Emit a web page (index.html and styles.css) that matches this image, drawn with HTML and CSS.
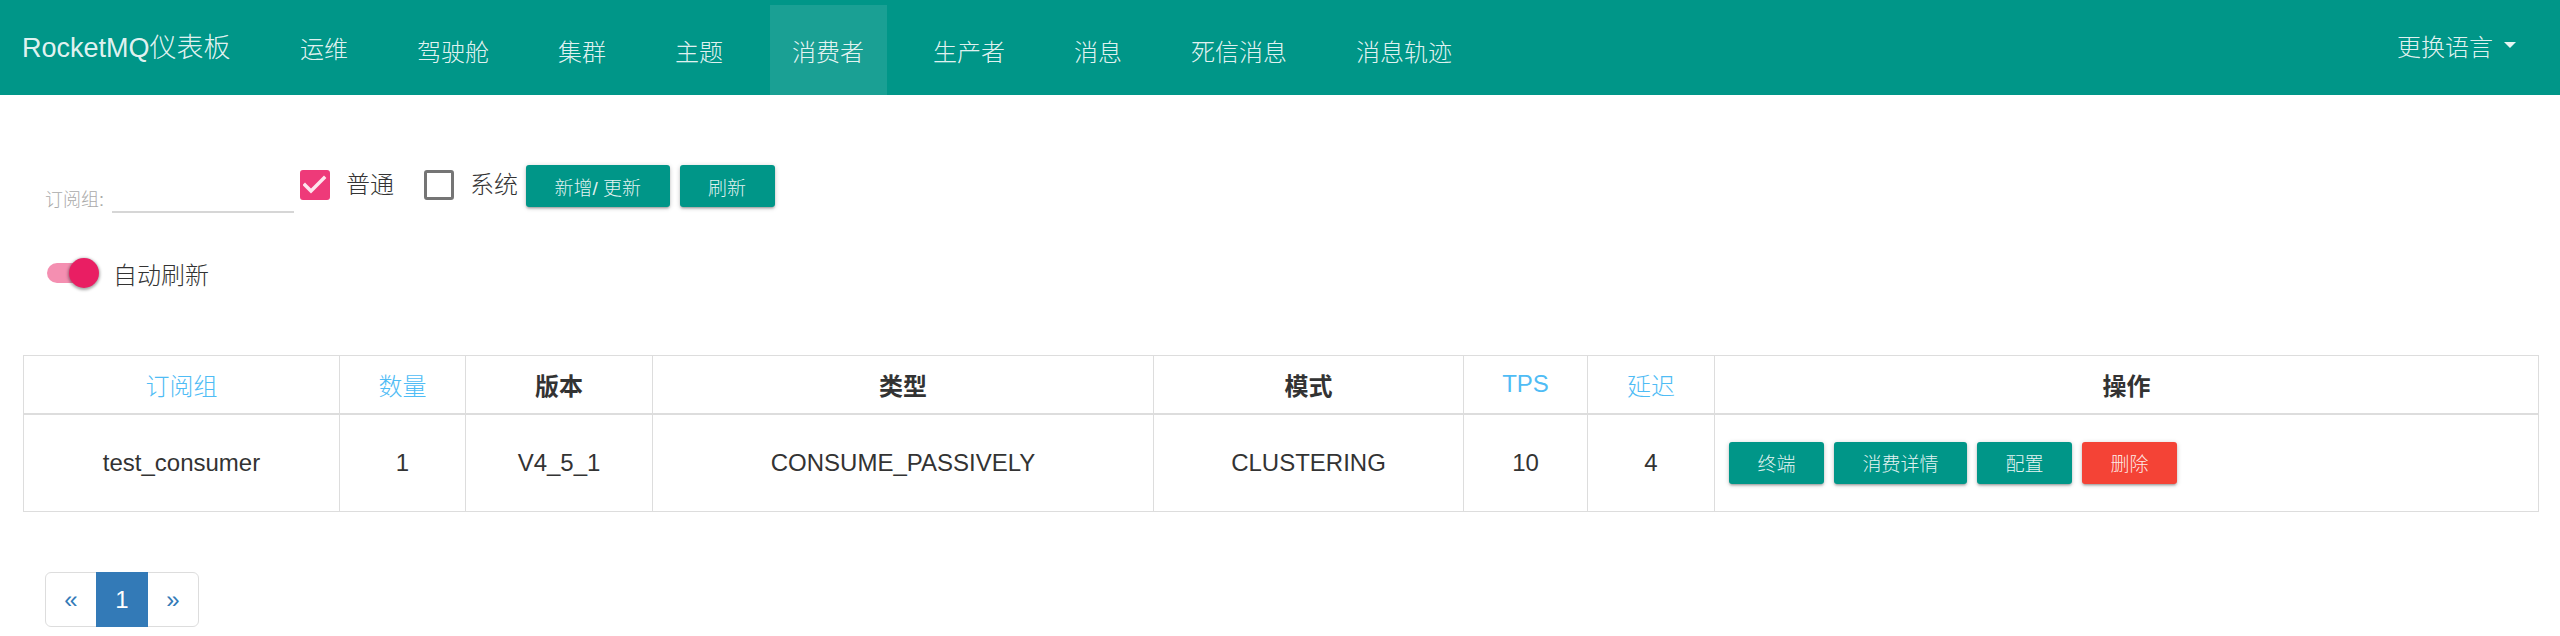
FILE: index.html
```html
<!DOCTYPE html>
<html lang="zh-CN">
<head>
<meta charset="utf-8">
<title>RocketMQ仪表板</title>
<link rel="stylesheet" href="styles.css">
</head>
<body>
<nav class="navbar">
  <a class="brand">RocketMQ仪表板</a>
  <ul class="nav">
    <li class="nav-item nav-item--raised">运维</li>
    <li class="nav-item">驾驶舱</li>
    <li class="nav-item">集群</li>
    <li class="nav-item">主题</li>
    <li class="nav-item active">消费者</li>
    <li class="nav-item">生产者</li>
    <li class="nav-item">消息</li>
    <li class="nav-item">死信消息</li>
    <li class="nav-item">消息轨迹</li>
  </ul>
  <div class="lang">更换语言<span class="caret"></span></div>
</nav>

<main class="content">
  <div class="filter-row">
    <label class="field"><span class="field-label">订阅组:</span><input class="field-input" type="text"></label>
    <label class="check check--first">
      <span class="check-box checked"><svg class="check-mark" width="24" height="24" viewBox="0 0 24 24"><polyline points="2,12 8,18 21,5" fill="none" stroke="#fde6ee" stroke-width="3.4" stroke-linecap="square"/></svg></span>
      <span class="check-text">普通</span>
    </label>
    <label class="check check--second">
      <span class="check-box"></span>
      <span class="check-text">系统</span>
    </label>
    <button class="btn btn--first">新增/ 更新</button>
    <button class="btn">刷新</button>
  </div>

  <div class="switch-row">
    <span class="switch"><span class="switch-track"></span><span class="switch-thumb"></span></span>
    <span class="switch-text">自动刷新</span>
  </div>

  <table class="grid">
    <colgroup>
      <col class="w-group"><col class="w-count"><col class="w-ver"><col class="w-type"><col class="w-mode"><col class="w-tps"><col class="w-delay"><col class="w-ops">
    </colgroup>
    <thead>
      <tr>
        <th class="sort">订阅组</th>
        <th class="sort">数量</th>
        <th>版本</th>
        <th>类型</th>
        <th>模式</th>
        <th class="sort">TPS</th>
        <th class="sort">延迟</th>
        <th>操作</th>
      </tr>
    </thead>
    <tbody>
      <tr>
        <td>test_consumer</td>
        <td>1</td>
        <td>V4_5_1</td>
        <td>CONSUME_PASSIVELY</td>
        <td>CLUSTERING</td>
        <td>10</td>
        <td>4</td>
        <td class="ops">
          <div class="ops-list">
            <button class="btn btn--sm">终端</button>
            <button class="btn btn--sm">消费详情</button>
            <button class="btn btn--sm">配置</button>
            <button class="btn btn--sm btn--danger">删除</button>
          </div>
        </td>
      </tr>
    </tbody>
  </table>

  <ul class="pagination">
    <li class="page"><span>«</span></li>
    <li class="page active"><span>1</span></li>
    <li class="page"><span>»</span></li>
  </ul>
</main>
</body>
</html>
```

FILE: styles.css
```css
* { box-sizing: border-box; }
html, body { margin: 0; padding: 0; }
body {
  font-family: "Liberation Sans", Arial, "Noto Sans CJK SC", sans-serif;
  font-size: 24px;
  font-weight: 300;
  color: #333;
  background: #fff;
}

/* ---------- navbar ---------- */
.navbar {
  display: flex;
  height: 95px;
  background: #009688;
  color: rgba(255, 255, 255, 0.9);
}
.brand {
  display: flex;
  align-items: center;
  padding: 0 0 5px 22px;
  margin-right: 35px;
  font-size: 27px;
  white-space: nowrap;
}
.nav {
  display: flex;
  list-style: none;
  margin: 0;
  padding: 5px 0 0;
}
.nav-item {
  display: flex;
  align-items: center;
  height: 90px;
  padding: 0 22.5px;
  margin: 0 12px;
  font-size: 24px;
  white-space: nowrap;
}
.nav-item--raised { padding-bottom: 6px; }
.nav-item.active { background: rgba(255, 255, 255, 0.1); }
.lang {
  display: flex;
  align-items: center;
  margin-left: auto;
  padding: 0 44px 5px 0;
  font-size: 24px;
}
.caret {
  width: 0;
  height: 0;
  margin-left: 11px;
  border-top: 6px solid rgba(255, 255, 255, 0.9);
  border-left: 6px solid transparent;
  border-right: 6px solid transparent;
}

/* ---------- content ---------- */
.content { padding: 0 22px 0 23px; }

.filter-row {
  display: flex;
  align-items: flex-start;
  height: 48px;
  margin-top: 70px;
  padding-left: 22px;
}
.field {
  display: flex;
  align-items: flex-end;
  height: 48px;
}
.field-label {
  font-size: 18px;
  line-height: 26px;
  color: #aaa;
}
.field-input {
  width: 182px;
  height: 30px;
  margin-left: 8px;
  padding: 0;
  border: 0;
  border-bottom: 2px solid #d6d6d6;
  background: transparent;
  outline: none;
  font: inherit;
}
.check {
  display: flex;
  align-items: center;
  height: 30px;
  margin-top: 5px;
}
.check--first { margin-left: 6px; }
.check--second { margin-left: 30px; }
.check-box {
  display: flex;
  align-items: center;
  justify-content: center;
  width: 30px;
  height: 30px;
  border: 3px solid #757575;
  border-radius: 3px;
}
.check-box.checked {
  background: #ee3a79;
  border-color: #ee3a79;
}
.check-text {
  margin-left: 16px;
  font-size: 24px;
  line-height: 30px;
  color: #333;
}

.btn {
  height: 42px;
  padding: 0 28.5px;
  border: 0;
  border-radius: 3px;
  background: #009688;
  color: rgba(255, 255, 255, 0.9);
  font-family: "Liberation Sans", Arial, "Noto Sans CJK SC", sans-serif;
  font-size: 19px;
  font-weight: 300;
  white-space: nowrap;
  box-shadow: 0 2px 2px 0 rgba(0,0,0,.14), 0 3px 1px -2px rgba(0,0,0,.12), 0 1px 5px 0 rgba(0,0,0,.2);
}
.filter-row .btn { margin-left: 10px; }
.filter-row .btn--first { margin-left: 8px; }
.btn--danger { background: #f44336; }

/* ---------- switch ---------- */
.switch-row {
  display: flex;
  align-items: center;
  height: 30px;
  margin-top: 45px;
  padding-left: 24px;
}
.switch {
  position: relative;
  width: 52px;
  height: 30px;
}
.switch-track {
  position: absolute;
  left: 0;
  top: 5px;
  width: 45px;
  height: 20px;
  border-radius: 10px;
  background: #f48fb1;
}
.switch-thumb {
  position: absolute;
  left: 22px;
  top: 0;
  width: 30px;
  height: 30px;
  border-radius: 50%;
  background: #e91e63;
  box-shadow: 0 1px 3px 1px rgba(0,0,0,.35);
}
.switch-text {
  margin-left: 14px;
  font-size: 24px;
}

/* ---------- table ---------- */
.grid {
  width: 100%;
  margin-top: 67px;
  border-collapse: collapse;
  table-layout: fixed;
}
.w-group { width: 316px; }
.w-count { width: 126px; }
.w-ver   { width: 187px; }
.w-type  { width: 501px; }
.w-mode  { width: 310px; }
.w-tps   { width: 124px; }
.w-delay { width: 127px; }
.w-ops   { width: 824px; }
.grid th, .grid td {
  border: 1px solid #ddd;
  padding: 0;
  text-align: center;
  vertical-align: middle;
  font-size: 24px;
}
.grid th {
  height: 58px;
  font-weight: bold;
  color: #333;
  border-bottom: 2px solid #ddd;
}
.grid th.sort {
  font-weight: 300;
  color: #4fbcf5;
}
.grid td { height: 98px; }
.grid td.ops { text-align: left; padding-left: 14px; }
.ops-list {
  display: flex;
  gap: 10px;
}

/* ---------- pagination ---------- */
.pagination {
  display: flex;
  list-style: none;
  margin: 60px 0 0 22px;
  padding: 0;
}
.page span {
  display: flex;
  align-items: center;
  justify-content: center;
  width: 52px;
  height: 55px;
  border: 1px solid #ddd;
  color: #337ab7;
  font-size: 24px;
}
.page + .page span { margin-left: -1px; }
.page:first-child span { border-radius: 6px 0 0 6px; }
.page:last-child span { border-radius: 0 6px 6px 0; }
.page.active span {
  position: relative;
  background: #337ab7;
  border-color: #337ab7;
  color: #fff;
}
```
